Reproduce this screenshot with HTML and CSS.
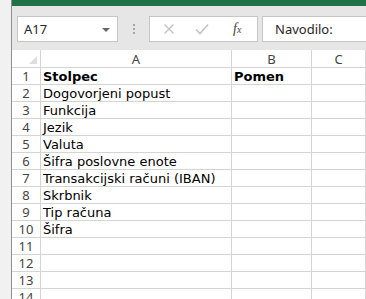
FILE: index.html
```html
<!DOCTYPE html>
<html>
<head>
    <title>Excel - Navodilo</title>
    <link rel="stylesheet" href="styles.css">
</head>
<body>
    <div class="window">
        <div class="side-strip"></div>
        <div class="main">
            <div class="title-bar"></div>

            <div class="toolbar">
                <div class="name-box">
                    <span>A17</span>
                    <span class="drop-arrow"></span>
                </div>
                <div class="grip">
                    <span></span><span></span><span></span>
                </div>
                <div class="fx-buttons">
                    <svg class="fx-icon" width="12" height="12" viewBox="0 0 12 12">
                        <path d="M1.5 1.5 L10.5 10.5 M10.5 1.5 L1.5 10.5" stroke="#c4c4c4" stroke-width="1.4" fill="none"/>
                    </svg>
                    <svg class="fx-icon" width="14" height="12" viewBox="0 0 14 12">
                        <path d="M1 6.5 L5 10.5 L13 1.5" stroke="#c4c4c4" stroke-width="1.6" fill="none"/>
                    </svg>
                    <span class="fx-label"><i>f</i><small>x</small></span>
                </div>
                <div class="formula-box">Navodilo:</div>
            </div>

            <div class="sheet">
                <div class="corner"><span class="corner-tri"></span></div>
                <div class="col-head">A</div>
                <div class="col-head">B</div>
                <div class="col-head">C</div>

                <div class="row-head">1</div>
                <div class="cell bold">Stolpec</div>
                <div class="cell bold">Pomen</div>
                <div class="cell"></div>

                <div class="row-head">2</div>
                <div class="cell">Dogovorjeni popust</div>
                <div class="cell"></div>
                <div class="cell"></div>

                <div class="row-head">3</div>
                <div class="cell">Funkcija</div>
                <div class="cell"></div>
                <div class="cell"></div>

                <div class="row-head">4</div>
                <div class="cell">Jezik</div>
                <div class="cell"></div>
                <div class="cell"></div>

                <div class="row-head">5</div>
                <div class="cell">Valuta</div>
                <div class="cell"></div>
                <div class="cell"></div>

                <div class="row-head">6</div>
                <div class="cell">Šifra poslovne enote</div>
                <div class="cell"></div>
                <div class="cell"></div>

                <div class="row-head">7</div>
                <div class="cell">Transakcijski računi (IBAN)</div>
                <div class="cell"></div>
                <div class="cell"></div>

                <div class="row-head">8</div>
                <div class="cell">Skrbnik</div>
                <div class="cell"></div>
                <div class="cell"></div>

                <div class="row-head">9</div>
                <div class="cell">Tip računa</div>
                <div class="cell"></div>
                <div class="cell"></div>

                <div class="row-head">10</div>
                <div class="cell">Šifra</div>
                <div class="cell"></div>
                <div class="cell"></div>

                <div class="row-head">11</div>
                <div class="cell"></div>
                <div class="cell"></div>
                <div class="cell"></div>

                <div class="row-head">12</div>
                <div class="cell"></div>
                <div class="cell"></div>
                <div class="cell"></div>

                <div class="row-head">13</div>
                <div class="cell"></div>
                <div class="cell"></div>
                <div class="cell"></div>

                <div class="row-head">14</div>
                <div class="cell"></div>
                <div class="cell"></div>
                <div class="cell"></div>
            </div>
        </div>
    </div>
</body>
</html>
```

FILE: styles.css
```css
body {
    margin: 0;
    font-family: "DejaVu Sans", sans-serif;
    background: #ffffff;
    overflow: hidden;
}
.window {
    display: flex;
    height: 299px;
    overflow: hidden;
}
.side-strip {
    width: 11px;
    background: #f1f1f1;
    border-right: 1px solid #8f8f8f;
    flex-shrink: 0;
}
.main {
    flex: 1;
    display: flex;
    flex-direction: column;
    min-width: 0;
}
.title-bar {
    height: 6px;
    flex-shrink: 0;
    background: #217346;
}
.toolbar {
    height: 44px;
    flex-shrink: 0;
    background: #e6e6e6;
    display: flex;
    align-items: flex-start;
    padding-top: 10px;
    padding-left: 5px;
    box-sizing: border-box;
    font-family: "Noto Sans", sans-serif;
    font-size: 13px;
    color: #262626;
}
.name-box {
    width: 101px;
    height: 26px;
    background: #fff;
    border: 1px solid #c6c6c6;
    display: flex;
    align-items: center;
    justify-content: space-between;
    padding: 0 7px 0 6px;
    box-sizing: border-box;
}
.drop-arrow {
    width: 0;
    height: 0;
    border-left: 4px solid transparent;
    border-right: 4px solid transparent;
    border-top: 4px solid #666;
    margin-top: 1px;
}
.grip {
    width: 31px;
    display: flex;
    flex-direction: column;
    align-items: center;
    gap: 2px;
    padding-top: 8px;
}
.grip span {
    width: 2px;
    height: 2px;
    background: #a6a6a6;
}
.fx-buttons {
    width: 109px;
    height: 26px;
    background: #fff;
    border: 1px solid #c6c6c6;
    box-sizing: border-box;
    display: flex;
    align-items: center;
    padding-left: 13px;
    gap: 20px;
}
.fx-label {
    font-family: "Liberation Serif", serif;
    font-size: 14px;
    color: #444;
    margin-left: 4px;
}
.fx-label small {
    font-size: 10px;
    font-style: italic;
}
.formula-box {
    flex: 1;
    height: 26px;
    margin-left: 4px;
    background: #fff;
    border: 1px solid #c6c6c6;
    border-right: none;
    box-sizing: border-box;
    padding-left: 12px;
    line-height: 24px;
    white-space: nowrap;
}
.sheet {
    display: grid;
    grid-template-columns: 29px 191px 80px 1fr;
    grid-template-rows: 18px;
    grid-auto-rows: 17px;
    font-size: 13px;
    color: #000;
}
.corner,
.col-head,
.row-head,
.cell {
    border-right: 1px solid #d4d4d4;
    border-bottom: 1px solid #d4d4d4;
    white-space: nowrap;
    overflow: visible;
}
.corner {
    position: relative;
    height: 17px;
}
.corner-tri {
    position: absolute;
    right: 3px;
    bottom: 3px;
    width: 0;
    height: 0;
    border-left: 8px solid transparent;
    border-bottom: 8px solid #dedede;
}
.col-head {
    height: 17px;
    text-align: center;
    line-height: 19px;
    color: #444;
    font-family: "Noto Sans", sans-serif;
    font-size: 13px;
}
.row-head {
    height: 16px;
    text-align: center;
    line-height: 17px;
    color: #444;
    font-family: "Noto Sans", sans-serif;
    font-size: 13px;
}
.cell {
    height: 16px;
    line-height: 17px;
    padding-left: 2px;
}
.cell.bold {
    font-weight: bold;
}
```
